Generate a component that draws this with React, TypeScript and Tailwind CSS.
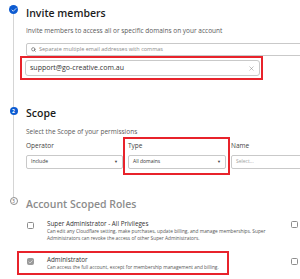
import React from "react";
import { Check, Search, X } from "lucide-react";

const font = "font-['Open_Sans','Liberation_Sans',sans-serif]";

const Step = ({
  marker,
  top,
  circleTop,
  first,
  last,
  className,
  children,
}: {
  marker: React.ReactNode;
  top: string;
  circleTop: string;
  first?: boolean;
  last?: boolean;
  className?: string;
  children: React.ReactNode;
}) => (
  <div className={`flex ${className ?? ""}`}>
    <div className="w-[26px] shrink-0 flex flex-col items-center pl-[1px]">
      <div className={`${circleTop} w-px ${first ? "" : "bg-[#d5d5d5]"}`} />
      {marker}
      {!last && <div className="flex-1 w-px bg-[#d5d5d5]" />}
    </div>
    <div className={`flex-1 ${top}`}>{children}</div>
  </div>
);

const Select = ({ value, muted }: { value: string; muted?: boolean }) => (
  <div className="h-[14px] border border-[#c9c9c9] rounded-[2px] flex items-center justify-between px-[4px] bg-white">
    <span className={`text-[5px] ${muted ? "text-[#a0a0a0]" : "text-[#333]"}`}>{value}</span>
    {!muted && <span className="text-[4px] text-[#444]">▼</span>}
  </div>
);

const Box = ({ checked }: { checked?: boolean }) => (
  <div
    className={`w-[7px] h-[7px] rounded-[1.5px] border flex items-center justify-center ${
      checked ? "bg-[#9a9a9a] border-[#9a9a9a]" : "bg-white border-[#8d8d8d]"
    }`}
  >
    {checked && <Check size={6} strokeWidth={3} className="text-white" />}
  </div>
);

export default function App() {
  return (
    <div className={`w-[300px] h-[279px] overflow-hidden bg-white ${font}`}>
      <div className="w-[340px]">
        {/* step 1 */}
        <Step
          first
          top="pt-[5px]"
          circleTop="h-[5px]"
          className="h-[100px]"
          marker={
            <div className="w-[9px] h-[9px] rounded-full bg-[#0d5bd1] flex items-center justify-center">
              <Check size={6} strokeWidth={3} className="text-white" />
            </div>
          }
        >
          <h1 className="text-[10.5px] leading-[16px] font-semibold text-[#1c1c1c]">Invite members</h1>
          <p className="mt-[5px] text-[6.5px] leading-[10px] text-[#5a5a5a]">
            Invite members to access all or specific domains on your account
          </p>
          <div className="mt-[7px] h-[13px] border border-[#c9c9c9] rounded-[2px] flex items-center gap-[3px] px-[4px]">
            <Search size={5} strokeWidth={3} className="text-[#555]" />
            <span className="text-[5.5px] text-[#8a8a8a]">Separate multiple email addresses with commas</span>
          </div>
          <div className="-ml-[6px] w-[243px] border-2 border-[#e8232b] pl-[3px] pr-[1px] py-[2px]">
            <div className="h-[16px] border border-[#c9c9c9] rounded-[3px] flex items-center justify-between px-[4px]">
              <span className="text-[7px] text-[#333]">support@go-creative.com.au</span>
              <X size={7} strokeWidth={1.5} className="text-[#777]" />
            </div>
          </div>
        </Step>

        {/* step 2 */}
        <Step
          top="pt-[5px]"
          circleTop="h-[7px]"
          className="h-[90px]"
          marker={
            <div className="w-[8px] h-[8px] rounded-full bg-[#0d5bd1] flex items-center justify-center text-[5px] font-bold text-white leading-none">
              2
            </div>
          }
        >
          <h2 className="text-[10.5px] leading-[16px] font-semibold text-[#1c1c1c]">Scope</h2>
          <p className="mt-[6px] text-[6.5px] leading-[10px] text-[#5a5a5a]">Select the Scope of your permissions</p>
          <div className="mt-[4px] grid grid-cols-[97px_98px_1fr] gap-x-[5px]">
            <div>
              <div className="text-[6.5px] leading-[10px] text-[#444]">Operator</div>
              <div className="mt-[4px]">
                <Select value="Include" />
              </div>
            </div>
            <div className="relative">
              <div className="text-[6.5px] leading-[10px] text-[#444]">Type</div>
              <div className="mt-[4px]">
                <Select value="All domains" />
              </div>
              <div className="absolute -left-[5px] -right-[4px] -top-[4px] -bottom-[6px] border-2 border-[#e8232b]" />
            </div>
            <div>
              <div className="text-[6.5px] leading-[10px] text-[#444]">Name</div>
              <div className="mt-[4px]">
                <Select value="Select..." muted />
              </div>
            </div>
          </div>
        </Step>

        {/* step 3 */}
        <Step
          last
          top="pt-[6px]"
          circleTop="h-[7px]"
          marker={
            <div className="w-[8px] h-[8px] rounded-full border border-[#8d8d8d] bg-white flex items-center justify-center text-[4.5px] text-[#555] leading-none">
              3
            </div>
          }
        >
          <h2 className="text-[10.5px] leading-[16px] font-semibold text-[#8c8c8c]">Account Scoped Roles</h2>
          <div className="w-[272px] mt-[7px] flex items-start">
            <div className="w-[21px] pt-[3px] pl-[1px]">
              <Box />
            </div>
            <div className="flex-1">
              <div className="text-[6.3px] leading-[9px] text-[#333]">Super Administrator - All Privileges</div>
              <div className="text-[4.8px] leading-[7px] text-[#555]">
                Can edit any Cloudflare setting, make purchases, update billing, and manage memberships. Super
                <br />
                Administrators can revoke the access of other Super Administrators.
              </div>
            </div>
            <div className="pt-[2px]">
              <Box />
            </div>
          </div>
          <div className="w-[272px] mt-[9px] flex items-start">
            <div className="-ml-[9px] w-[212px] border-2 border-[#e8232b] flex items-start py-[2px]">
              <div className="w-[28px] pt-[3px] pl-[8px]">
                <Box checked />
              </div>
              <div className="flex-1">
                <div className="text-[6.3px] leading-[9px] text-[#333]">Administrator</div>
                <div className="text-[4.8px] leading-[7px] text-[#555]">
                  Can access the full account, except for membership management and billing.
                </div>
              </div>
            </div>
            <div className="flex-1" />
            <div className="pt-[7px]">
              <Box />
            </div>
          </div>
        </Step>
      </div>
    </div>
  );
}
